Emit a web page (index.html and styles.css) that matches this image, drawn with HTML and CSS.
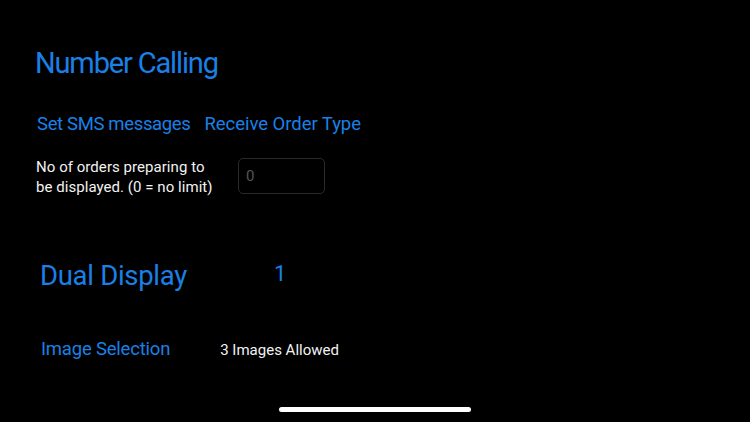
FILE: index.html
```html
<!DOCTYPE html>
<html>
<head>
<meta charset="utf-8">
<link rel="stylesheet" href="styles.css">
</head>
<body>
<main class="screen">
  <h1 class="title">Number Calling</h1>
  <div class="links">
    <span class="link link-sms">Set SMS messages</span>
    <span class="link link-order">Receive Order Type</span>
  </div>
  <div class="setting">
    <p class="setting-label">No of orders preparing to be displayed. (0 = no limit)</p>
    <div class="field">0</div>
  </div>
  <div class="dual">
    <h2 class="dual-title">Dual Display</h2>
    <span class="dual-count">1</span>
  </div>
  <div class="images">
    <span class="link images-link">Image Selection</span>
    <span class="images-note">3 Images Allowed</span>
  </div>
</main>
<div class="home-indicator"></div>
</body>
</html>
```
FILE: styles.css
```css
html, body {
  margin: 0;
  padding: 0;
  background: #000;
  width: 750px;
  height: 422px;
  overflow: hidden;
  font-family: Roboto, "Liberation Sans", Arial, sans-serif;
}
.screen {
  padding: 46px 0 0 35px;
  display: flex;
  flex-direction: column;
  align-items: flex-start;
}
.title {
  margin: 0;
  font-size: 29px;
  line-height: 34px;
  font-weight: normal;
  letter-spacing: -1.15px;
  color: #1a80e6;
}
.links {
  display: flex;
  gap: 14px;
  margin: 33px 0 0 2px;
}
.link {
  font-size: 18.5px;
  line-height: 22px;
  color: #1a80e6;
}
.link-sms {
  letter-spacing: -0.35px;
}
.link-order {
  letter-spacing: -0.05px;
}
.setting {
  display: flex;
  align-items: flex-start;
  gap: 24px;
  margin: 21.5px 0 0 1px;
}
.setting-label {
  margin: 0;
  width: 178px;
  font-size: 15px;
  line-height: 20.5px;
  letter-spacing: 0.05px;
  color: #f2f2f2;
}
.field {
  box-sizing: border-box;
  width: 87px;
  height: 36px;
  margin-top: 1px;
  border: 1px solid #2a2a2c;
  border-radius: 5px;
  padding-left: 7px;
  font-size: 15px;
  line-height: 34px;
  color: #555;
}
.dual {
  display: flex;
  align-items: flex-start;
  gap: 87px;
  margin: 62px 0 0 5px;
}
.dual-title {
  margin: 0;
  font-size: 27.5px;
  line-height: 32px;
  font-weight: normal;
  letter-spacing: -0.3px;
  color: #1a80e6;
}
.dual-count {
  font-size: 22px;
  line-height: 32px;
  margin-top: -2px;
  color: #1a80e6;
}
.images {
  display: flex;
  align-items: baseline;
  gap: 50px;
  margin: 46px 0 0 6px;
}
.images-link {
  letter-spacing: -0.2px;
}
.images-note {
  font-size: 15px;
  color: #f2f2f2;
}
.home-indicator {
  position: absolute;
  left: 50%;
  bottom: 10px;
  width: 192px;
  height: 5px;
  margin-left: -96px;
  border-radius: 3px;
  background: #fff;
}
```
